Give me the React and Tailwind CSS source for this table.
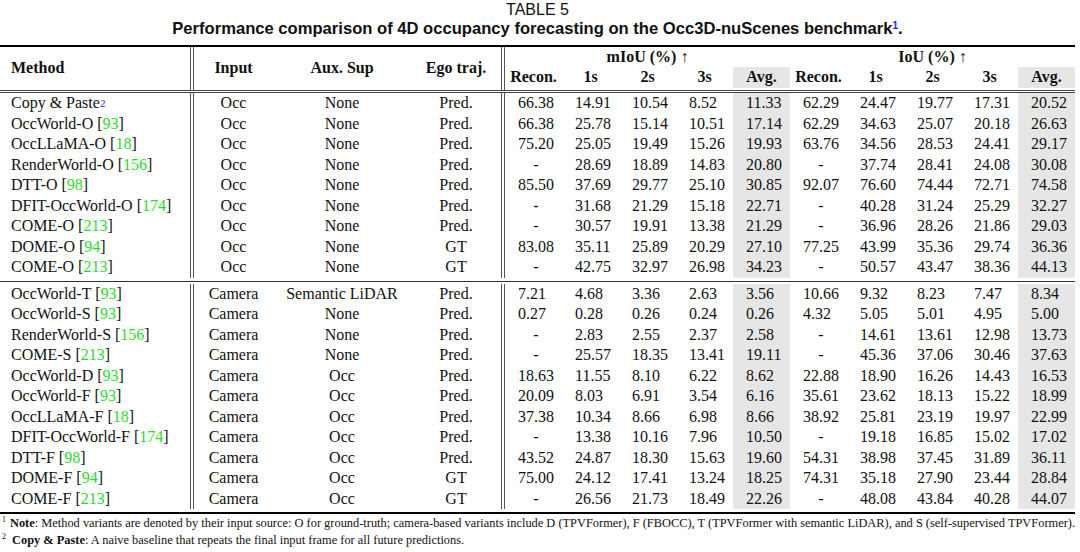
import React from 'react'

const COLS = 'grid grid-cols-[190px_4px_79px_138px_90px_4px_repeat(10,57px)]'

const groupOne = [
  { name: 'Copy & Paste', sup: '2', input: 'Occ', aux: 'None', ego: 'Pred.', v: ['66.38', '14.91', '10.54', '8.52', '11.33', '62.29', '24.47', '19.77', '17.31', '20.52'] },
  { name: 'OccWorld-O', cite: '93', input: 'Occ', aux: 'None', ego: 'Pred.', v: ['66.38', '25.78', '15.14', '10.51', '17.14', '62.29', '34.63', '25.07', '20.18', '26.63'] },
  { name: 'OccLLaMA-O', cite: '18', input: 'Occ', aux: 'None', ego: 'Pred.', v: ['75.20', '25.05', '19.49', '15.26', '19.93', '63.76', '34.56', '28.53', '24.41', '29.17'] },
  { name: 'RenderWorld-O', cite: '156', input: 'Occ', aux: 'None', ego: 'Pred.', v: ['-', '28.69', '18.89', '14.83', '20.80', '-', '37.74', '28.41', '24.08', '30.08'] },
  { name: 'DTT-O', cite: '98', input: 'Occ', aux: 'None', ego: 'Pred.', v: ['85.50', '37.69', '29.77', '25.10', '30.85', '92.07', '76.60', '74.44', '72.71', '74.58'] },
  { name: 'DFIT-OccWorld-O', cite: '174', input: 'Occ', aux: 'None', ego: 'Pred.', v: ['-', '31.68', '21.29', '15.18', '22.71', '-', '40.28', '31.24', '25.29', '32.27'] },
  { name: 'COME-O', cite: '213', input: 'Occ', aux: 'None', ego: 'Pred.', v: ['-', '30.57', '19.91', '13.38', '21.29', '-', '36.96', '28.26', '21.86', '29.03'] },
  { name: 'DOME-O', cite: '94', input: 'Occ', aux: 'None', ego: 'GT', v: ['83.08', '35.11', '25.89', '20.29', '27.10', '77.25', '43.99', '35.36', '29.74', '36.36'] },
  { name: 'COME-O', cite: '213', input: 'Occ', aux: 'None', ego: 'GT', v: ['-', '42.75', '32.97', '26.98', '34.23', '-', '50.57', '43.47', '38.36', '44.13'] },
]

const groupTwo = [
  { name: 'OccWorld-T', cite: '93', input: 'Camera', aux: 'Semantic LiDAR', ego: 'Pred.', v: ['7.21', '4.68', '3.36', '2.63', '3.56', '10.66', '9.32', '8.23', '7.47', '8.34'] },
  { name: 'OccWorld-S', cite: '93', input: 'Camera', aux: 'None', ego: 'Pred.', v: ['0.27', '0.28', '0.26', '0.24', '0.26', '4.32', '5.05', '5.01', '4.95', '5.00'] },
  { name: 'RenderWorld-S', cite: '156', input: 'Camera', aux: 'None', ego: 'Pred.', v: ['-', '2.83', '2.55', '2.37', '2.58', '-', '14.61', '13.61', '12.98', '13.73'] },
  { name: 'COME-S', cite: '213', input: 'Camera', aux: 'None', ego: 'Pred.', v: ['-', '25.57', '18.35', '13.41', '19.11', '-', '45.36', '37.06', '30.46', '37.63'] },
  { name: 'OccWorld-D', cite: '93', input: 'Camera', aux: 'Occ', ego: 'Pred.', v: ['18.63', '11.55', '8.10', '6.22', '8.62', '22.88', '18.90', '16.26', '14.43', '16.53'] },
  { name: 'OccWorld-F', cite: '93', input: 'Camera', aux: 'Occ', ego: 'Pred.', v: ['20.09', '8.03', '6.91', '3.54', '6.16', '35.61', '23.62', '18.13', '15.22', '18.99'] },
  { name: 'OccLLaMA-F', cite: '18', input: 'Camera', aux: 'Occ', ego: 'Pred.', v: ['37.38', '10.34', '8.66', '6.98', '8.66', '38.92', '25.81', '23.19', '19.97', '22.99'] },
  { name: 'DFIT-OccWorld-F', cite: '174', input: 'Camera', aux: 'Occ', ego: 'Pred.', v: ['-', '13.38', '10.16', '7.96', '10.50', '-', '19.18', '16.85', '15.02', '17.02'] },
  { name: 'DTT-F', cite: '98', input: 'Camera', aux: 'Occ', ego: 'Pred.', v: ['43.52', '24.87', '18.30', '15.63', '19.60', '54.31', '38.98', '37.45', '31.89', '36.11'] },
  { name: 'DOME-F', cite: '94', input: 'Camera', aux: 'Occ', ego: 'GT', v: ['75.00', '24.12', '17.41', '13.24', '18.25', '74.31', '35.18', '27.90', '23.44', '28.84'] },
  { name: 'COME-F', cite: '213', input: 'Camera', aux: 'Occ', ego: 'GT', v: ['-', '26.56', '21.73', '18.49', '22.26', '-', '48.08', '43.84', '40.28', '44.07'] },
]

const subHeads = [
  { label: 'Recon.', col: 'col-start-7' },
  { label: '1s', col: 'col-start-8' },
  { label: '2s', col: 'col-start-9' },
  { label: '3s', col: 'col-start-10' },
  { label: 'Avg.', col: 'col-start-11', shade: true },
  { label: 'Recon.', col: 'col-start-12' },
  { label: '1s', col: 'col-start-13' },
  { label: '2s', col: 'col-start-14' },
  { label: '3s', col: 'col-start-15' },
  { label: 'Avg.', col: 'col-start-16', shade: true },
]

const Bar = ({ className = '' }) => (
  <div className={`border-x border-[#555] ${className}`} />
)

const Num = ({ value, shaded }) => (
  <div className={`pl-[13px] whitespace-nowrap ${shaded ? 'bg-[#e6e6e6]' : ''}`}>
    {value === '-' ? <span className="inline-block w-[36px] text-center">-</span> : value}
  </div>
)

const Row = ({ row }) => (
  <div className={`${COLS} h-[20.5px] leading-[20.5px]`}>
    <div className="pl-[11px] whitespace-nowrap">
      {row.name}
      {row.sup && <sup className="text-[11px] text-[#1a1aff] relative -top-[1px]">{row.sup}</sup>}
      {row.cite && (
        <>
          {' '}[<span className="text-[#1fe01f]">{row.cite}</span>]
        </>
      )}
    </div>
    <Bar />
    <div className="text-center">{row.input}</div>
    <div className="text-center whitespace-nowrap">{row.aux}</div>
    <div className="text-center">{row.ego}</div>
    <Bar />
    {row.v.map((value, i) => (
      <Num key={i} value={value} shaded={i === 4 || i === 9} />
    ))}
  </div>
)

export default function App() {
  return (
    <div className="w-[1080px] h-[552px] bg-white text-[#111] overflow-hidden">
      {/* Caption */}
      <div className="font-['Liberation_Sans',Arial,sans-serif] text-center w-[1075px]">
        <div className="text-[16px] leading-[19px]">TABLE 5</div>
        <div className="text-[16.6px] leading-[19px] font-bold whitespace-nowrap">
          Performance comparison of 4D occupancy forecasting on the Occ3D-nuScenes benchmark
          <sup className="text-[10px] text-[#1a1aff]">1</sup>.
        </div>
      </div>

      <div className="w-[1075px] mt-[7px] font-['Liberation_Serif','Times_New_Roman',serif] text-[16px]">
        {/* Top rule */}
        <div className="h-[2px] bg-black" />

        {/* Header */}
        <div className={`${COLS} grid-rows-[20px_21px_2px] font-bold`}>
          <div className="col-start-1 row-start-1 row-span-2 pl-[11px] flex items-center">Method</div>
          <Bar className="col-start-2 row-start-1 row-span-3" />
          <div className="col-start-3 row-start-1 row-span-2 flex items-center justify-center">Input</div>
          <div className="col-start-4 row-start-1 row-span-2 flex items-center justify-center">Aux. Sup</div>
          <div className="col-start-5 row-start-1 row-span-2 flex items-center justify-center">Ego traj.</div>
          <Bar className="col-start-6 row-start-1 row-span-3" />
          <div className="col-start-7 col-span-5 row-start-1 text-center leading-[20px] whitespace-nowrap">
            mIoU (%) <span className="font-normal">↑</span>
          </div>
          <div className="col-start-12 col-span-5 row-start-1 text-center leading-[20px] whitespace-nowrap">
            IoU (%) <span className="font-normal">↑</span>
          </div>
          {subHeads.map((h, i) => (
            <div
              key={i}
              className={`${h.col} row-start-2 text-center leading-[20px] ${h.shade ? 'bg-[#e6e6e6]' : ''}`}
            >
              {h.label}
            </div>
          ))}
        </div>

        {/* Double rule */}
        <div className="h-[1px] bg-[#444]" />
        <div className="h-[1px]" />
        <div className="h-[1px] bg-[#444]" />

        {groupOne.map((row, i) => (
          <Row key={i} row={row} />
        ))}

        <div className="h-[3px]" />
        <div className="h-[1px] bg-[#333]" />
        <div className="h-[2px]" />

        {groupTwo.map((row, i) => (
          <Row key={i} row={row} />
        ))}

        <div className="h-[3px]" />
        <div className="h-[2px] bg-black" />

        {/* Footnotes */}
        <div className="mt-[1px] text-[12.4px] leading-[17px] whitespace-nowrap">
          <div className="flex">
            <span className="w-[12px] pl-[2px] text-[8px] leading-[10px]">1</span>
            <span>
              <b>Note</b>: Method variants are denoted by their input source: O for ground-truth; camera-based variants include D (TPVFormer), F (FBOCC), T (TPVFormer with semantic LiDAR), and S (self-supervised TPVFormer).
            </span>
          </div>
          <div className="flex">
            <span className="w-[12px] pl-[2px] text-[8px] leading-[10px]">2</span>
            <span>
              <b>Copy &amp; Paste</b>: A naive baseline that repeats the final input frame for all future predictions.
            </span>
          </div>
        </div>
      </div>
    </div>
  )
}
